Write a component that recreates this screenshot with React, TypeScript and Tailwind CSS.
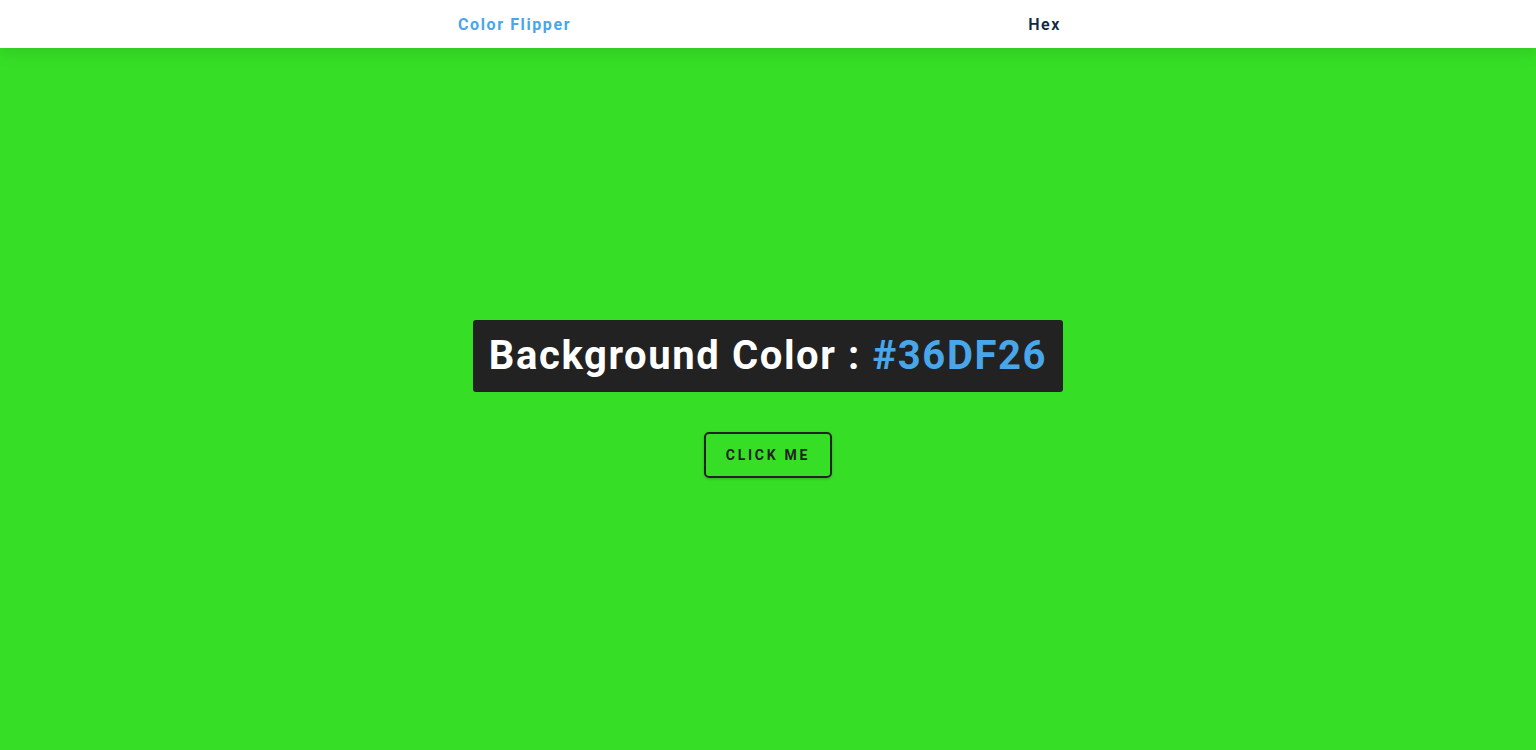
import React, { useState } from 'react'

const hexChars = ['0','1','2','3','4','5','6','7','8','9','A','B','C','D','E','F']

const App = () => {
    const [color, setColor] = useState('#36DF26')

    const flip = () => {
        let hex = '#'
        for (let i = 0; i < 6; i++) {
            hex += hexChars[Math.floor(Math.random() * hexChars.length)]
        }
        setColor(hex)
    }

    return (
        <div className="min-h-screen flex flex-col font-['Roboto',sans-serif]" style={{ backgroundColor: color }}>
            {/* Navbar */}
            <nav className="h-12 bg-white shadow-[0_5px_15px_rgba(0,0,0,0.1)] flex items-center">
                <div className="w-[620px] mx-auto flex justify-between items-center pt-[2px]">
                    <h4 className="text-[#49a6e9] font-bold text-base tracking-[0.1rem]">Color Flipper</h4>
                    <ul className="flex pr-[17px]">
                        <li className="text-[#102a42] font-semibold text-base tracking-[0.1rem]">Hex</li>
                    </ul>
                </div>
            </nav>

            {/* Main */}
            <main className="flex-1 flex flex-col items-center justify-center">
                <h2 className="bg-[#222] text-white text-[40px] leading-[72px] font-bold tracking-[0.1rem] px-4 rounded-[3px] h-[72px]">
                    Background Color : <span className="text-[#49a6e9]">{color}</span>
                </h2>
                <button
                    onClick={flip}
                    className="mt-10 px-5 py-[11px] border-2 border-[#222] rounded-[5px] text-[#222] text-sm font-bold uppercase tracking-[0.17rem] shadow-[0_1px_3px_rgba(0,0,0,0.2)]"
                >
                    Click me
                </button>
            </main>
        </div>
    )
}

export default App
